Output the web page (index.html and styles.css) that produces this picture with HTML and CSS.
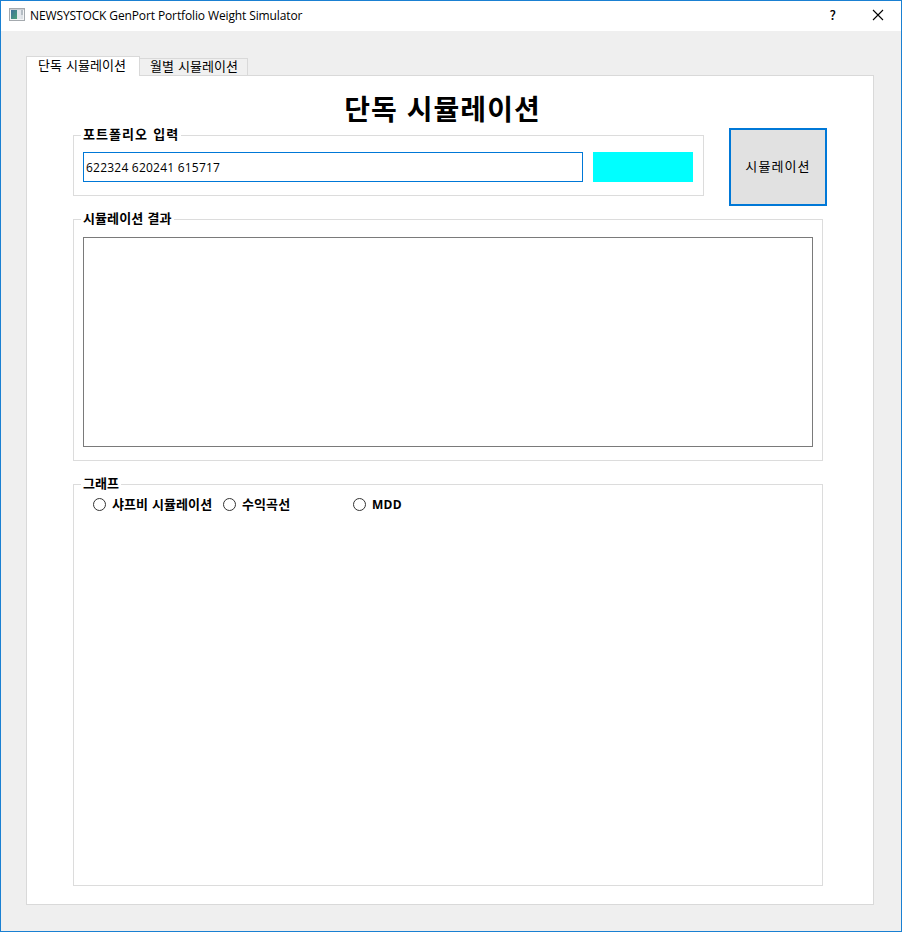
FILE: index.html
```html
<!DOCTYPE html>
<html lang="ko">
<head>
<meta charset="utf-8">
<title>NEWSYSTOCK GenPort Portfolio Weight Simulator</title>
<link rel="stylesheet" href="styles.css">
</head>
<body>
<div class="window">
  <header class="titlebar">
    <svg class="app-icon" width="16" height="14" viewBox="0 0 16 14">
      <defs><linearGradient id="pane" x1="0" y1="0" x2="1" y2="1"><stop offset="0" stop-color="#3f6f9c"/><stop offset="1" stop-color="#4aa277"/></linearGradient></defs>
      <rect x=".5" y=".5" width="15" height="12" fill="#f4f5f6" stroke="#a4a9ae"/>
      <rect x="1" y="1" width="14" height="1" fill="#c9ced3"/>
      <rect x="2" y="2" width="6" height="9" fill="url(#pane)"/>
      <rect x="8" y="2" width="4" height="9" fill="#e4e7ec"/>
      <rect x="12" y="2" width="2" height="5" fill="#b5bdc4"/>
      <rect x="12" y="7" width="2" height="4" fill="#dde1e5"/>
    </svg>
    <span class="caption">NEWSYSTOCK GenPort Portfolio Weight Simulator</span>
    <span class="help">?</span>
    <svg class="close" width="12" height="12" viewBox="0 0 12 12"><path d="M1 1 11 11M11 1 1 11" stroke="#000" stroke-width="1.1"/></svg>
  </header>
  <main class="client">
    <nav class="tabs">
      <div class="tab active"><span>단독 시뮬레이션</span></div>
      <div class="tab"><span>월별 시뮬레이션</span></div>
    </nav>
    <section class="panel">
      <h1>단독 시뮬레이션</h1>
      <div class="top-row">
        <div class="group input-group">
          <div class="legend wide">포트폴리오 입력</div>
          <div class="field">622324 620241 615717</div>
          <div class="status"></div>
        </div>
        <div class="button">시뮬레이션</div>
      </div>
      <div class="group result-group">
        <div class="legend">시뮬레이션 결과</div>
        <div class="output"></div>
      </div>
      <div class="group graph-group">
        <div class="legend">그래프</div>
        <div class="radio"><i></i><span>샤프비 시뮬레이션</span></div>
        <div class="radio"><i></i><span>수익곡선</span></div>
        <div class="radio"><i></i><span class="latin">MDD</span></div>
      </div>
    </section>
  </main>
</div>
</body>
</html>
```
FILE: styles.css
```css
* { box-sizing: border-box; }
body { margin: 0; font-family: "Noto Sans CJK KR", sans-serif; font-size: 13px; color: #000; }
.window { width: 902px; height: 932px; border: 1px solid #1a80d2; background: #efefef; white-space: nowrap; }
.titlebar { height: 30px; background: #fff; display: flex; align-items: center; padding: 0 17px 0 8px; }
.app-icon { margin-right: 5px; margin-bottom: 2px; }
.caption { font-family: "Open Sans", sans-serif; font-size: 12px; line-height: 16px; letter-spacing: -.12px; }
.help { margin-left: auto; margin-right: 36px; padding-bottom: 3px; font-size: 13px; line-height: 18px; font-weight: 500; }
.close { margin-bottom: 2px; }
.client { padding: 25px 27px 0 25px; }
.tabs { display: flex; align-items: flex-end; height: 19px; }
.tab { height: 17px; width: 108px; border: 1px solid #d9d9d9; border-left: 0; border-bottom: 0; background: #f0f0f0; padding-left: 10px; line-height: 14px; word-spacing: .5px; }
.tab.active { width: 114px; height: 20px; margin-bottom: -1px; position: relative; z-index: 1; border-left: 1px solid #d9d9d9; background: #fff; padding-left: 11px; line-height: 15px; }
.panel { width: 848px; height: 830px; border: 1px solid #d9d9d9; background: #fff; padding: 0 46px; }
h1 { margin: 0; padding-top: 13px; height: 52px; font-size: 28px; line-height: 38px; font-weight: 700; text-align: center; letter-spacing: 1.05px; padding-right: 15px; }
.top-row { display: flex; align-items: flex-start; justify-content: space-between; width: 754px; height: 91px; }
.group { border: 1px solid #dcdcdc; position: relative; }
.legend { position: absolute; left: 7px; top: -11px; height: 18px; line-height: 18px; padding: 0 2px; background: #fff; font-weight: 700; letter-spacing: .1px; word-spacing: .5px; }
.legend.wide { letter-spacing: 1.05px; }
.input-group { width: 631px; height: 61px; margin-top: 7px; padding: 16px 9px; display: flex; gap: 10px; }
.field { width: 500px; height: 30px; border: 1px solid #0078d7; padding-left: 2px; font-family: "Open Sans", sans-serif; font-size: 12px; line-height: 30px; letter-spacing: .22px; }
.status { width: 100px; height: 30px; background: #0ff; }
.button { width: 98px; height: 78px; border: 2px solid #0078d7; background: #e1e1e1; text-align: center; line-height: 72px; letter-spacing: 1.1px; }
.result-group { width: 750px; height: 242px; padding: 17px 9px; }
.output { height: 210px; border: 1px solid #7a7a7a; }
.graph-group { width: 750px; height: 402px; margin-top: 23px; padding: 10px 19px; display: flex; }
.radio { width: 130px; height: 18px; display: flex; align-items: center; gap: 6px; font-weight: 700; letter-spacing: .1px; }
.radio span { line-height: 18px; padding-bottom: 1px; }
.radio i { flex: none; width: 13px; height: 13px; border: 1px solid #333; border-radius: 50%; }
.radio .latin { font-family: "Open Sans", sans-serif; font-size: 12px; padding: 1px 0 0; letter-spacing: .3px; }
```
